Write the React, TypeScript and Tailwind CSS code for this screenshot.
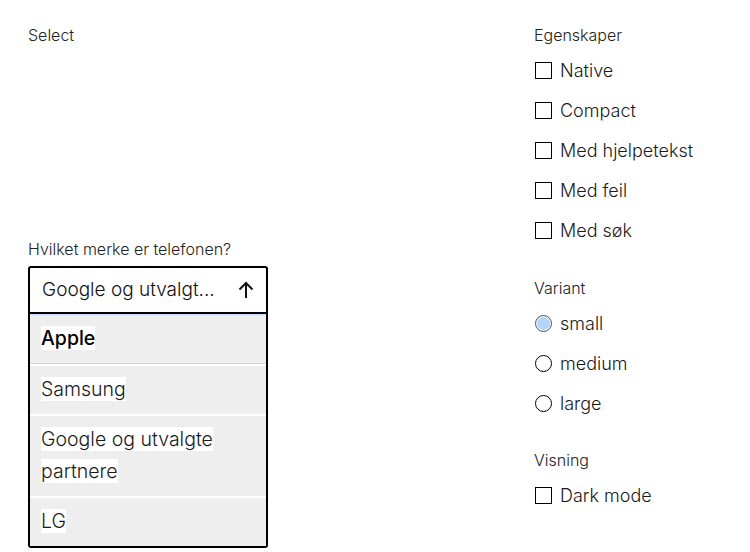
import React from "react";

const font = { fontFamily: "Inter, 'Liberation Sans', sans-serif" };

const options = ["Apple", "Samsung", "Google og utvalgte partnere", "LG"];

const Checkbox: React.FC<{ label: string }> = ({ label }) => (
    <label className="flex items-center h-10 gap-[8px]">
        <span className="w-[17px] h-[17px] border border-black bg-white shrink-0 ml-px" />
        <span className="text-[18px] font-light text-[#1a1a1a]">{label}</span>
    </label>
);

const Radio: React.FC<{ label: string; checked?: boolean }> = ({ label, checked }) => (
    <label className="flex items-center h-10 gap-[8px]">
        <span
            className={`w-[17px] h-[17px] rounded-full border shrink-0 ml-px ${checked ? "border-[#555] bg-[#b5d3f8] ring-1 ring-inset ring-white" : "border-black bg-white"}`}
        />
        <span className="text-[18px] font-light text-[#1a1a1a]">{label}</span>
    </label>
);

export default function App() {
    return (
        <div className="flex bg-white w-[750px] h-[552px] overflow-hidden pl-7 pt-[25px]" style={font}>
            <div className="w-[506px] flex flex-col">
                <div className="text-[16px] font-light text-[#222] leading-5">Select</div>
                <div className="mt-[194px] text-[16px] font-light text-[#222] leading-5">Hvilket merke er telefonen?</div>
                <div className="mt-[7px] w-[240px]">
                    <div className="h-12 border-2 border-black rounded-t-[3px] flex items-center justify-between pl-3 pr-3 bg-white">
                        <span className="text-[19px] font-light text-[#111]">Google og utvalgt...</span>
                        <svg width="16" height="18" viewBox="0 0 16 18" fill="none" stroke="#111" strokeWidth="2">
                            <path d="M8 17V2M1.5 8.5L8 2l6.5 6.5" />
                        </svg>
                    </div>
                    <ul className="border-2 border-t-0 border-black rounded-b-[3px] bg-white">
                        {options.map((o, i) => (
                            <li
                                key={o}
                                className={`bg-[#eeeeee] px-[11px] pt-[7px] pb-[9px] text-[19.5px] leading-8 ${i === 0 ? "border-y border-[#c3d9f7] font-medium text-black" : "font-light text-[#1a1a1a]"} ${i > 0 ? "mt-[2px]" : ""}`}
                            >
                                <span className="bg-white box-decoration-clone">{o === "Google og utvalgte partnere" ? <>Google og utvalgte<br />partnere</> : o}</span>
                            </li>
                        ))}
                    </ul>
                </div>
            </div>
            <div className="flex flex-col">
                <div className="text-[16px] font-light text-[#222] leading-5">Egenskaper</div>
                <div className="mt-[5px]">
                    <Checkbox label="Native" />
                    <Checkbox label="Compact" />
                    <Checkbox label="Med hjelpetekst" />
                    <Checkbox label="Med feil" />
                    <Checkbox label="Med søk" />
                </div>
                <div className="mt-[28px] text-[16px] font-light text-[#222] leading-5">Variant</div>
                <div className="mt-[5px]">
                    <Radio label="small" checked />
                    <Radio label="medium" />
                    <Radio label="large" />
                </div>
                <div className="mt-[27px] text-[16px] font-light text-[#222] leading-5">Visning</div>
                <div className="mt-[5px]">
                    <Checkbox label="Dark mode" />
                </div>
            </div>
        </div>
    );
}
